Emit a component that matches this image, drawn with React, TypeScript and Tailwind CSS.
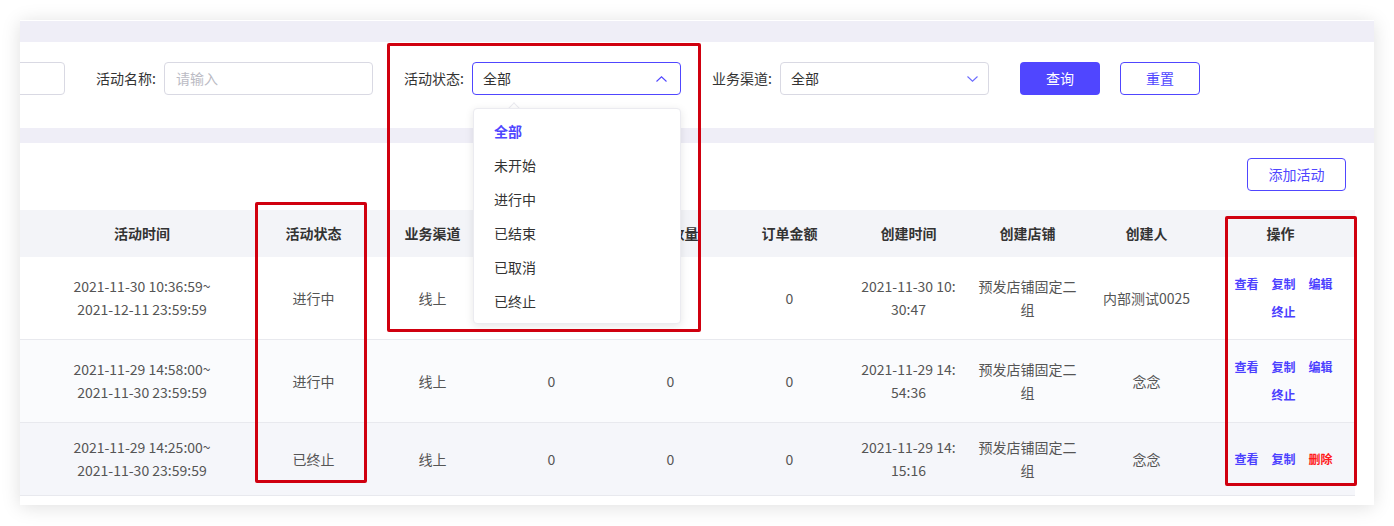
import React from 'react'

type Row = {
  time: string[]
  status: string
  channel: string
  c4: string
  c5: string
  amount: string
  created: string[]
  store: string
  creator: string
  actions: { label: string; danger?: boolean }[]
  bg: string
}

const rows: Row[] = [
  {
    time: ['2021-11-30 10:36:59~', '2021-12-11 23:59:59'],
    status: '进行中',
    channel: '线上',
    c4: '0',
    c5: '0',
    amount: '0',
    created: ['2021-11-30 10:', '30:47'],
    store: '预发店铺固定二组',
    creator: '内部测试0025',
    actions: [{ label: '查看' }, { label: '复制' }, { label: '编辑' }, { label: '终止' }],
    bg: 'bg-white',
  },
  {
    time: ['2021-11-29 14:58:00~', '2021-11-30 23:59:59'],
    status: '进行中',
    channel: '线上',
    c4: '0',
    c5: '0',
    amount: '0',
    created: ['2021-11-29 14:', '54:36'],
    store: '预发店铺固定二组',
    creator: '念念',
    actions: [{ label: '查看' }, { label: '复制' }, { label: '编辑' }, { label: '终止' }],
    bg: 'bg-[#fafbfd]',
  },
  {
    time: ['2021-11-29 14:25:00~', '2021-11-30 23:59:59'],
    status: '已终止',
    channel: '线上',
    c4: '0',
    c5: '0',
    amount: '0',
    created: ['2021-11-29 14:', '15:16'],
    store: '预发店铺固定二组',
    creator: '念念',
    actions: [{ label: '查看' }, { label: '复制' }, { label: '删除', danger: true }],
    bg: 'bg-[#f5f6fa]',
  },
]

const statusOptions = ['全部', '未开始', '进行中', '已结束', '已取消', '已终止']

const cols = 'grid grid-cols-[234px_119px_119px_119px_119px_119px_119px_119px_119px_149px]'

const Chevron = ({ up, color }: { up?: boolean; color: string }) => (
  <svg width="11" height="6" viewBox="0 0 11 6" fill="none">
    <path d={up ? 'M0.5 5.5L5.5 0.8L10.5 5.5' : 'M0.5 0.5L5.5 5.2L10.5 0.5'} stroke={color} strokeWidth="1.1" />
  </svg>
)

const App: React.FC = () => {
  return (
    <div className="relative w-[1394px] h-[526px] bg-white pt-[20px] pl-[20px] font-['Noto_Sans_CJK_SC','Noto_Sans',sans-serif] text-[14px]">
      <div className="relative w-[1354px] h-[485px] bg-white shadow-[0_2px_18px_rgba(0,0,0,0.13)] overflow-hidden">
        <div className="h-[1px] bg-white" />
        <div className="h-[21px] bg-[#efeef7]" />

        {/* filters */}
        <div className="h-[86px] pt-[20px] flex items-start">
          <div className="ml-[-165px] w-[210px] h-[33px] border border-[#d9d9e3] rounded-[4px] shrink-0" />
          <div className="ml-[31px] w-[60px] shrink-0 flex items-center h-[33px] text-[#333] whitespace-nowrap">活动名称:</div>
          <div className="ml-[8px] w-[209px] h-[33px] border border-[#d9d9e3] rounded-[4px] flex items-center pl-[11px] text-[#bbbbc4] shrink-0">
            请输入
          </div>
          <div className="ml-[31px] w-[60px] shrink-0 flex items-center h-[33px] text-[#333] whitespace-nowrap">活动状态:</div>
          <div className="relative ml-[8px] shrink-0">
            <div className="w-[209px] h-[33px] border border-[#5046ff] rounded-[4px] flex items-center justify-between pl-[10px] pr-[13px] text-[#333]">
              <span>全部</span>
              <Chevron up color="#5046ff" />
            </div>
          </div>
          <div className="ml-[31px] w-[60px] shrink-0 flex items-center h-[33px] text-[#333] whitespace-nowrap">业务渠道:</div>
          <div className="ml-[8px] w-[209px] h-[33px] border border-[#d9d9e3] rounded-[4px] flex items-center justify-between pl-[10px] pr-[10px] text-[#333] shrink-0">
            <span>全部</span>
            <Chevron color="#6b6bff" />
          </div>
          <button className="ml-[31px] w-[80px] h-[33px] rounded-[4px] bg-[#5046ff] text-white shrink-0">查询</button>
          <button className="ml-[20px] w-[80px] h-[33px] rounded-[4px] border border-[#5046ff] text-[#5046ff] bg-white shrink-0">重置</button>
        </div>

        <div className="h-[15px] bg-[#efeef7]" />

        {/* table area */}
        <div className="flex justify-end pt-[15px] pb-[19px] pr-[28px]">
          <button className="w-[99px] h-[33px] rounded-[4px] border border-[#5046ff] text-[#5046ff] bg-white">添加活动</button>
        </div>

        <div className="w-[1335px]">
          <div className={`${cols} h-[47px] bg-[#f3f4f8] text-[#333] font-semibold items-center text-center`}>
            <div className="pl-[10px]">活动时间</div>
            <div>活动状态</div>
            <div>业务渠道</div>
            <div>参与人数</div>
            <div>订单数量</div>
            <div>订单金额</div>
            <div>创建时间</div>
            <div>创建店铺</div>
            <div>创建人</div>
            <div>操作</div>
          </div>
          {rows.map((r, i) => (
            <div key={i} className={`${cols} ${r.bg} border-b border-[#e8e9ee] py-[13px] items-center text-center text-[#555]`}>
              <div className="pl-[10px] leading-[23px]">
                {r.time[0]}
                <br />
                {r.time[1]}
              </div>
              <div>{r.status}</div>
              <div>{r.channel}</div>
              <div>{r.c4}</div>
              <div>{r.c5}</div>
              <div>{r.amount}</div>
              <div className="leading-[23px]">
                {r.created[0]}
                <br />
                {r.created[1]}
              </div>
              <div className="px-[8px] leading-[23px]">{r.store}</div>
              <div>{r.creator}</div>
              <div className="pl-[19px] pr-[13px] flex flex-wrap justify-center gap-x-[13px] text-[12px] font-semibold leading-[28px]">
                {r.actions.map((a) => (
                  <span key={a.label} className={a.danger ? 'text-[#ff1a1a]' : 'text-[#4b40ff]'}>
                    {a.label}
                  </span>
                ))}
              </div>
            </div>
          ))}
        </div>
      </div>

      {/* open dropdown of 活动状态 */}
      <div className="absolute left-[473px] top-[108px] w-[208px] z-10">
        <div className="absolute left-[37px] top-[-4px] w-[8px] h-[8px] bg-white rotate-45 border-l border-t border-[#ebebf0]" />
        <div className="relative bg-white rounded-[4px] border border-[#ebebf0] shadow-[0_2px_8px_rgba(0,0,0,0.1)] py-[5px]">
          {statusOptions.map((o, i) => (
            <div
              key={o}
              className={`h-[34px] flex items-center pl-[20px] ${i === 0 ? 'text-[#5046ff] font-semibold' : 'text-[#333]'}`}
            >
              {o}
            </div>
          ))}
        </div>
      </div>

      {/* annotation boxes */}
      <div className="absolute left-[387px] top-[43px] w-[314px] h-[289px] border-[3px] border-[#d0000f] rounded-[2px] z-20" />
      <div className="absolute left-[255px] top-[202px] w-[112px] h-[281px] border-[3px] border-[#d0000f] rounded-[2px] z-20" />
      <div className="absolute left-[1225px] top-[216px] w-[132px] h-[270px] border-[3px] border-[#d0000f] rounded-[2px] z-20" />
    </div>
  )
}

export default App
